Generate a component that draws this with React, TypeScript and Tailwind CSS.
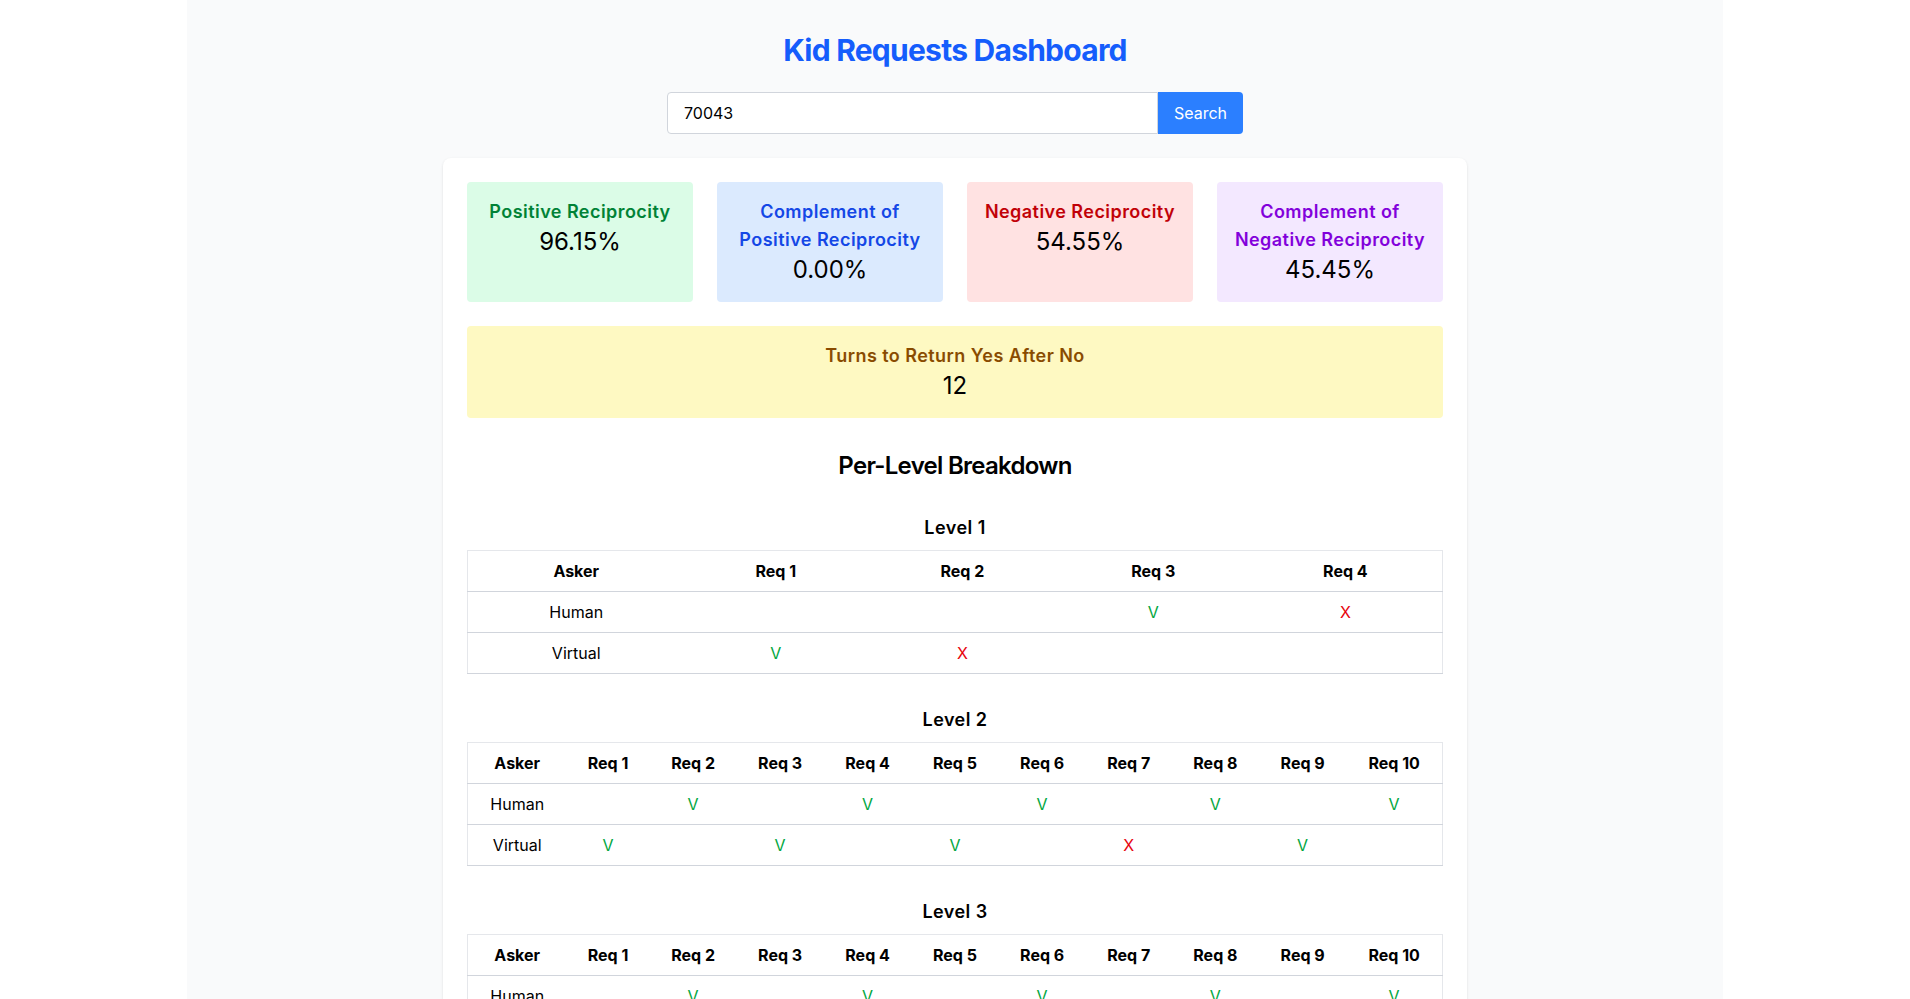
import React, { useState } from 'react';

type Mark = 'V' | 'X' | '';

interface LevelData {
  level: number;
  human: Mark[];
  virtual: Mark[];
}

const levels: LevelData[] = [
  {
    level: 1,
    human: ['', '', 'V', 'X'],
    virtual: ['V', 'X', '', ''],
  },
  {
    level: 2,
    human: ['', 'V', '', 'V', '', 'V', '', 'V', '', 'V'],
    virtual: ['V', '', 'V', '', 'V', '', 'X', '', 'V', ''],
  },
  {
    level: 3,
    human: ['', 'V', '', 'V', '', 'V', '', 'V', '', 'V'],
    virtual: ['V', '', 'V', '', 'V', '', 'V', '', 'V', ''],
  },
];

const MarkCell = ({ mark }: { mark: Mark }) => (
  <td className="px-4 py-2 text-center">
    {mark === 'V' && <span className="text-green-600">V</span>}
    {mark === 'X' && <span className="text-red-600">X</span>}
  </td>
);

const LevelTable = ({ data }: { data: LevelData }) => (
  <div className="mt-8">
    <h3 className="text-lg font-semibold text-center mb-2 tracking-wide">Level {data.level}</h3>
    <table className="w-full border border-gray-200 border-collapse">
      <thead>
        <tr className="border-b border-gray-300">
          <th className="px-4 py-2 font-bold">Asker</th>
          {data.human.map((_, i) => (
            <th key={i} className="px-4 py-2 font-bold">
              Req {i + 1}
            </th>
          ))}
        </tr>
      </thead>
      <tbody>
        <tr className="border-b border-gray-300">
          <td className="px-4 py-2 text-center">Human</td>
          {data.human.map((m, i) => (
            <MarkCell key={i} mark={m} />
          ))}
        </tr>
        <tr className="border-b border-gray-300">
          <td className="px-4 py-2 text-center">Virtual</td>
          {data.virtual.map((m, i) => (
            <MarkCell key={i} mark={m} />
          ))}
        </tr>
      </tbody>
    </table>
  </div>
);

const App = () => {
  const [kidId, setKidId] = useState('70043');

  return (
    <div
      className="min-h-screen max-w-screen-2xl mx-auto bg-gray-50 p-8 text-black"
      style={{ fontFamily: 'Inter, "Noto Sans", sans-serif' }}
    >
      <h1 className="text-3xl font-bold text-blue-600 text-center mb-6 tracking-tight">
        Kid Requests Dashboard
      </h1>

      {/* Search */}
      <form className="flex max-w-xl mx-auto mb-6" onSubmit={e => e.preventDefault()}>
        <input
          type="text"
          value={kidId}
          onChange={e => setKidId(e.target.value)}
          className="flex-1 border border-gray-300 rounded-l px-4 py-2 bg-white text-base outline-none"
        />
        <button type="submit" className="bg-blue-500 text-white px-4 py-2 rounded-r">
          Search
        </button>
      </form>

      <div className="max-w-5xl mx-auto bg-white rounded-lg shadow p-6">
        {/* Stats */}
        <div className="grid grid-cols-4 gap-6">
          <div className="bg-green-100 rounded p-4 text-center">
            <p className="text-lg font-semibold text-green-700 tracking-wide">Positive Reciprocity</p>
            <p className="text-2xl">96.15%</p>
          </div>
          <div className="bg-blue-100 rounded p-4 text-center">
            <p className="text-lg font-semibold text-blue-700 tracking-wide">
              Complement of Positive Reciprocity
            </p>
            <p className="text-2xl">0.00%</p>
          </div>
          <div className="bg-red-100 rounded p-4 text-center">
            <p className="text-lg font-semibold text-red-700 tracking-wide">Negative Reciprocity</p>
            <p className="text-2xl">54.55%</p>
          </div>
          <div className="bg-purple-100 rounded p-4 text-center">
            <p className="text-lg font-semibold text-purple-700 tracking-wide">
              Complement of Negative Reciprocity
            </p>
            <p className="text-2xl">45.45%</p>
          </div>
        </div>

        <div className="bg-yellow-100 rounded p-4 text-center mt-6">
          <p className="text-lg font-semibold text-yellow-800 tracking-wide">Turns to Return Yes After No</p>
          <p className="text-2xl">12</p>
        </div>

        {/* Per-level tables */}
        <h2 className="text-2xl font-semibold text-center mt-8 tracking-[-0.03em]">Per-Level Breakdown</h2>
        {levels.map(l => (
          <LevelTable key={l.level} data={l} />
        ))}
      </div>
    </div>
  );
};

export default App;
